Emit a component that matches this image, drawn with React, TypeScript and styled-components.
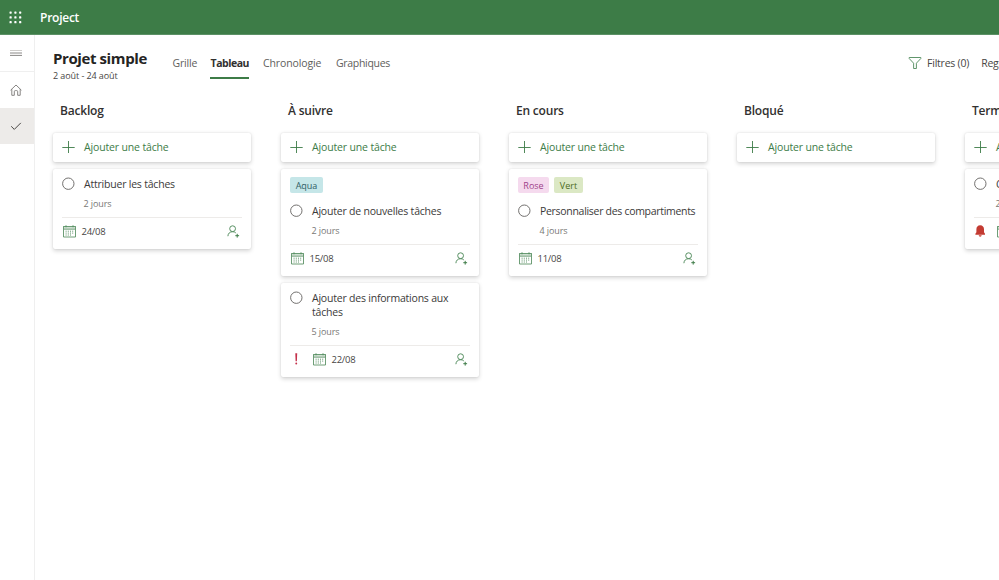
import React from "react";
import styled, { createGlobalStyle } from "styled-components";

const green = "#3d7c47";

const GlobalStyle = createGlobalStyle`
  * { box-sizing: border-box; }
  html, body { margin: 0; padding: 0; overflow: hidden; background: #fff; }
  body { font-family: "Open Sans", "Noto Sans", sans-serif; color: #3b3a39; }
`;

const Page = styled.div`
  display: flex;
  flex-direction: column;
  width: 100vw;
  height: 100vh;
  overflow: hidden;
`;

const TopBar = styled.header`
  display: flex;
  align-items: center;
  flex: none;
  height: 35px;
  padding-left: 9px;
  gap: 18px;
  background: ${green};
  border-bottom: 1px solid #5c9166;
  color: #fff;
`;

const AppName = styled.span`
  font-size: 12px;
  font-weight: 600;
  line-height: 16px;
  letter-spacing: -0.25px;
  padding-top: 1px;
`;

const Body = styled.div`
  display: flex;
  flex: 1;
  min-height: 0;
`;

const Rail = styled.nav`
  flex: none;
  width: 35px;
  border-right: 1px solid #efefef;
`;

const RailItem = styled.div<{ $active?: boolean; $line?: boolean }>`
  display: flex;
  align-items: center;
  justify-content: center;
  height: ${(p) => (p.$line ? 37 : 36)}px;
  padding-right: 3px;
  background: ${(p) => (p.$active ? "#edebe9" : "transparent")};
  border-bottom: ${(p) => (p.$line ? "1px solid #efefef" : "none")};
`;

const Main = styled.main`
  flex: 1;
  min-width: 0;
  padding-left: 18px;
  overflow: hidden;
`;

const PlanHeader = styled.div`
  display: flex;
  height: 67px;
  width: 1010px;
`;

const PlanInfo = styled.div`
  width: 119.5px;
  padding-top: 13px;
  white-space: nowrap;
`;

const PlanTitle = styled.h1`
  margin: 0;
  font-size: 15px;
  font-weight: 700;
  line-height: 20px;
  letter-spacing: -0.4px;
  color: #252423;
`;

const PlanDates = styled.div`
  padding-top: 1px;
  font-size: 9px;
  line-height: 14px;
  letter-spacing: -0.08px;
  color: #484644;
`;

const Tabs = styled.div`
  display: flex;
  gap: 14px;
  padding-top: 18px;
`;

const Tab = styled.div<{ $active?: boolean; $spacing: number; $width: number }>`
  width: ${(p) => p.$width}px;
  height: 26px;
  padding-left: ${(p) => (p.$active ? 0.5 : 0)}px;
  font-size: 10.5px;
  line-height: 20px;
  letter-spacing: ${(p) => p.$spacing}px;
  font-weight: ${(p) => (p.$active ? 700 : 400)};
  color: ${(p) => (p.$active ? "#323130" : "#605e5c")};
  border-bottom: 2px solid ${(p) => (p.$active ? green : "transparent")};
  white-space: nowrap;
`;

const Tools = styled.div`
  display: flex;
  align-items: flex-start;
  gap: 12px;
  margin-left: auto;
  width: 155px;
  flex: none;
  padding-top: 18px;
  font-size: 10.5px;
  line-height: 20px;
  letter-spacing: -0.22px;
  color: #484644;
  white-space: nowrap;
`;

const Tool = styled.span`
  display: flex;
  align-items: center;
  gap: 5px;
`;

const Board = styled.div`
  display: flex;
  gap: 30px;
`;

const Column = styled.section`
  flex: none;
  width: 198px;
`;

const ColumnTitle = styled.h2`
  margin: 0 0 0 7px;
  height: 31px;
  font-size: 12px;
  font-weight: 600;
  line-height: 18px;
  letter-spacing: -0.2px;
  color: #323130;
`;

const Stack = styled.div`
  display: flex;
  flex-direction: column;
  gap: 7px;
`;

const Surface = styled.div`
  background: #fff;
  border-radius: 2px;
  box-shadow: 0 1.5px 4px rgba(0, 0, 0, 0.17), 0 0 1.5px rgba(0, 0, 0, 0.1);
`;

const AddTask = styled(Surface)`
  display: flex;
  align-items: center;
  height: 29px;
  padding: 0 0 1px 9px;
  gap: 9px;
  font-size: 10.5px;
  line-height: 14px;
  letter-spacing: -0.15px;
  color: ${green};
`;

const Card = styled(Surface)`
  padding: 8px 9px 5px;
`;

const Tags = styled.div`
  display: flex;
  gap: 5px;
  margin-bottom: 11px;
`;

const Tag = styled.span<{ $bg: string; $fg: string; $width: number }>`
  width: ${(p) => p.$width}px;
  height: 16px;
  border-radius: 2px;
  background: ${(p) => p.$bg};
  color: ${(p) => p.$fg};
  font-size: 9px;
  line-height: 17px;
  text-align: center;
`;

const TaskRow = styled.div`
  display: flex;
  gap: 9px;
`;

const TaskName = styled.div<{ $tight: boolean }>`
  font-size: 10.5px;
  line-height: 14px;
  letter-spacing: ${(p) => (p.$tight ? -0.3 : -0.21)}px;
  color: #3b3a39;
  white-space: pre;
`;

const Duration = styled.div`
  margin: 7px 0 7px 21.5px;
  font-size: 9px;
  line-height: 12px;
  letter-spacing: -0.1px;
  color: #797775;
`;

const CardFooter = styled.div`
  display: flex;
  align-items: center;
  height: 27px;
  border-top: 1px solid #edebe9;
  font-size: 9.5px;
  letter-spacing: -0.25px;
  color: #484644;
`;

const FlagSlot = styled.span`
  display: flex;
  width: 22px;
`;

const DueDate = styled.span`
  margin-left: 5.5px;
`;

const AssignSlot = styled.span`
  display: flex;
  margin-left: auto;
  padding-right: 2px;
`;

const Icon = styled.svg`
  display: block;
  flex: none;
  fill: none;
`;

const Waffle = () => (
  <Icon width="13" height="13" viewBox="0 0 13 13">
    {[0.5, 5.3, 10.1].map((y) =>
      [0.5, 5.3, 10.1].map((x) => (
        <rect key={`${x}-${y}`} x={x} y={y} width="2.2" height="2.2" rx="0.6" fill="#fff" />
      ))
    )}
  </Icon>
);

const MenuIcon = () => (
  <Icon width="12" height="8" viewBox="0 0 12 8">
    <path d="M0 1.5h12" stroke="#c8c6c4" strokeWidth="0.9" />
    <path d="M0 4h12M0 6.400h12" stroke="#8a8886" strokeWidth="1" />
  </Icon>
);

const HomeIcon = () => (
  <Icon width="12" height="12" viewBox="0 0 12 12">
    <path
      d="M.6 6.200 6 1l5.400 5.200M1.800 5.200v6.100h2.500V7.600q0-1 1-1h1.400q1 0 1 1v3.700h2.500V5.200"
      stroke="#797775"
      strokeWidth="0.9"
    />
  </Icon>
);

const CheckIcon = () => (
  <Icon width="12" height="12" viewBox="0 0 12 12">
    <path d="m1.2 6.3 3.1 3.1 6.5-6.5" stroke="#484644" strokeWidth="1" />
  </Icon>
);

const FilterIcon = () => (
  <Icon width="14" height="14" viewBox="0 0 14 14">
    <path d="M1.2 1.5h11.6v1L8.4 7.2v5.3H5.6V7.2L1.2 2.5z" stroke="#4f8a5b" strokeWidth="0.9" />
  </Icon>
);

const PlusIcon = () => (
  <Icon width="13" height="12" viewBox="0 0 13 12">
    <path d="M.3 6.500h12.400M6.500 0v12" stroke={green} strokeWidth="0.9" />
  </Icon>
);

const Circle = () => (
  <Icon width="13" height="14" viewBox="0 0 13 14">
    <circle cx="6.3" cy="6.700" r="5.700" stroke="#6b6967" strokeWidth="0.95" />
  </Icon>
);

const CalendarIcon = () => (
  <Icon width="14" height="13" viewBox="0 0 14 13">
    <path d="M1.5 1.500h12v10.500h-12z" stroke="#5d9368" strokeWidth="0.9" />
    <path d="M1.500 1.500h12v2.700h-12z" fill="#cfe0d2" stroke="#5d9368" strokeWidth="0.8" />
    <path d="M4 .3v2M11 .3v2" stroke="#4f8a5b" strokeWidth="0.9" />
    <path
      d="M3.600 6.200h8M3.600 8.100h8M3.600 10h6"
      stroke="#4f8a5b"
      strokeWidth="0.9"
      strokeDasharray="1 1.2"
    />
  </Icon>
);

const AssignIcon = () => (
  <Icon width="13" height="13" viewBox="0 0 13 13">
    <circle cx="5.600" cy="3.700" r="2.900" stroke="#4f8a5b" strokeWidth="0.95" />
    <path d="M.9 11.200c.1-2.700 1.900-4.500 4.700-4.500 1.300 0 2.400.4 3.200 1.200" stroke="#4f8a5b" strokeWidth="0.95" />
    <path d="M10.200 8.800v3.800M8.300 10.700h3.800" stroke={green} strokeWidth="1" />
  </Icon>
);

const ImportantIcon = () => (
  <Icon width="12" height="12" viewBox="0 0 12 12">
    <path d="M5.300.3h1.900l-.3 7.900H5.600z" fill="#c4314b" />
    <circle cx="6.250" cy="10.500" r="0.95" fill="#c4314b" />
  </Icon>
);

const BellIcon = () => (
  <Icon width="12" height="12" viewBox="0 0 12 12">
    <path
      d="M6.200.3c2.400 0 3.800 1.700 3.800 3.900v3l1 1.600v.9H1.400v-.9l1-1.600v-3C2.400 2 3.800.3 6.200.3zM4.700 10.300h3c-.1.900-.7 1.400-1.500 1.400s-1.400-.5-1.500-1.400z"
      fill="#c33b32"
    />
  </Icon>
);

type TagData = { label: string; bg: string; fg: string; width: number };
type Task = {
  name: string;
  duration: string;
  due: string;
  tags?: TagData[];
  flag?: "important" | "late";
};

const columns: { title: string; tasks: Task[] }[] = [
  { title: "Backlog", tasks: [{ name: "Attribuer les tâches", duration: "2 jours", due: "24/08" }] },
  {
    title: "À suivre",
    tasks: [
      {
        name: "Ajouter de nouvelles tâches",
        duration: "2 jours",
        due: "15/08",
        tags: [{ label: "Aqua", bg: "#c5e6e8", fg: "#2f6065", width: 33 }],
      },
      {
        name: "Ajouter des informations aux\ntâches",
        duration: "5 jours",
        due: "22/08",
        flag: "important",
      },
    ],
  },
  {
    title: "En cours",
    tasks: [
      {
        name: "Personnaliser des compartiments",
        duration: "4 jours",
        due: "11/08",
        tags: [
          { label: "Rose", bg: "#f5daee", fg: "#a0418a", width: 31 },
          { label: "Vert", bg: "#dbe8c4", fg: "#4c6b22", width: 29 },
        ],
      },
    ],
  },
  { title: "Bloqué", tasks: [] },
  {
    title: "Terminé",
    tasks: [{ name: "Créer un projet", duration: "2 jours", due: "02/08", flag: "late" }],
  },
];

const TaskCard = ({ task }: { task: Task }) => (
  <Card>
    {task.tags && (
      <Tags>
        {task.tags.map((t) => (
          <Tag key={t.label} $bg={t.bg} $fg={t.fg} $width={t.width}>
            {t.label}
          </Tag>
        ))}
      </Tags>
    )}
    <TaskRow>
      <Circle />
      <TaskName $tight={task.name.length > 30 && !task.name.includes("\n")}>{task.name}</TaskName>
    </TaskRow>
    <Duration>{task.duration}</Duration>
    <CardFooter>
      {task.flag && <FlagSlot>{task.flag === "important" ? <ImportantIcon /> : <BellIcon />}</FlagSlot>}
      <CalendarIcon />
      <DueDate>{task.due}</DueDate>
      <AssignSlot>
        <AssignIcon />
      </AssignSlot>
    </CardFooter>
  </Card>
);

export default function App() {
  return (
    <Page>
      <GlobalStyle />
      <TopBar>
        <Waffle />
        <AppName>Project</AppName>
      </TopBar>
      <Body>
        <Rail>
          <RailItem $line>
            <MenuIcon />
          </RailItem>
          <RailItem>
            <HomeIcon />
          </RailItem>
          <RailItem $active>
            <CheckIcon />
          </RailItem>
        </Rail>
        <Main>
          <PlanHeader>
            <PlanInfo>
              <PlanTitle>Projet simple</PlanTitle>
              <PlanDates>2 août - 24 août</PlanDates>
            </PlanInfo>
            <Tabs>
              <Tab $spacing={-0.2} $width={23.5}>Grille</Tab>
              <Tab $active $spacing={-0.45} $width={39}>Tableau</Tab>
              <Tab $spacing={-0.12} $width={59}>Chronologie</Tab>
              <Tab $spacing={-0.3} $width={54}>Graphiques</Tab>
            </Tabs>
            <Tools>
              <Tool>
                <FilterIcon />
                Filtres (0)
              </Tool>
              <Tool>Regrouper par</Tool>
            </Tools>
          </PlanHeader>
          <Board>
            {columns.map((c) => (
              <Column key={c.title}>
                <ColumnTitle>{c.title}</ColumnTitle>
                <Stack>
                  <AddTask>
                    <PlusIcon />
                    Ajouter une tâche
                  </AddTask>
                  {c.tasks.map((t) => (
                    <TaskCard key={t.name} task={t} />
                  ))}
                </Stack>
              </Column>
            ))}
          </Board>
        </Main>
      </Body>
    </Page>
  );
}
